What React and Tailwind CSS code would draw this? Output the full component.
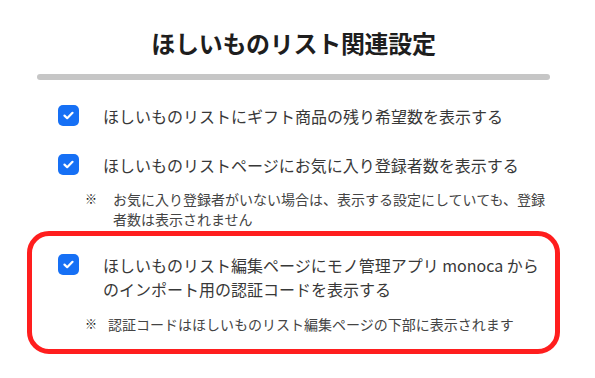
const FONT = { fontFamily: '"Noto Sans CJK JP", "Noto Sans", sans-serif' };

function Check() {
  return (
    <span className="flex h-[21px] w-[21px] shrink-0 items-center justify-center rounded-[5px] bg-[#1670f5]">
      <svg width="11" height="9" viewBox="0 0 11 9" fill="none">
        <path d="M1.5 4.6 4.2 7.2 9.5 1.8" stroke="#fff" strokeWidth="2.2" strokeLinecap="round" strokeLinejoin="round" />
      </svg>
    </span>
  );
}

function Item({ children }) {
  return (
    <div className="flex items-start pl-[21px]">
      <Check />
      <p className="ml-[24px] text-[16px] leading-[24px] text-[#383838] -mt-px">{children}</p>
    </div>
  );
}

function Note({ gap, children }) {
  return (
    <div className="flex items-start pl-[48px] text-[14px] leading-[20px] text-[#444]">
      <span className={`shrink-0 text-[12px] font-black text-[#111] ${gap}`}>※</span>
      <p>{children}</p>
    </div>
  );
}

export default function App() {
  return (
    <div className="h-[378px] w-[595px] bg-white" style={FONT}>
      <div className="ml-[37px] w-[513px] pt-[27px]">
        <h1 className="text-center text-[24px] font-bold leading-[32px] tracking-[-0.3px] text-[#1e1e1e]">
          ほしいものリスト関連設定
        </h1>
        <div className="mt-[15px] h-[6px] rounded-full bg-[#c6c6c6]" />

        <div className="mt-[25px]">
          <Item>ほしいものリストにギフト商品の残り希望数を表示する</Item>
        </div>
        <div className="mt-[26px]">
          <Item>ほしいものリストページにお気に入り登録者数を表示する</Item>
        </div>
        <div className="mt-[12px]">
          <Note gap="w-[28px]">
            お気に入り登録者がいない場合は、表示する設定にしていても、登録
            <br />
            者数は表示されません
          </Note>
        </div>

        <div className="-mx-[10px] mt-[2px] rounded-[22px] border-[5px] border-[#ff1e1e] px-[5px] pb-[15px] pt-[18px]">
          <Item>
            ほしいものリスト編集ページにモノ管理アプリ monoca から
            <br />
            のインポート用の認証コードを表示する
          </Item>
          <div className="mt-[13px]">
            <Note gap="w-[23px]">認証コードはほしいものリスト編集ページの下部に表示されます</Note>
          </div>
        </div>
      </div>
    </div>
  );
}
